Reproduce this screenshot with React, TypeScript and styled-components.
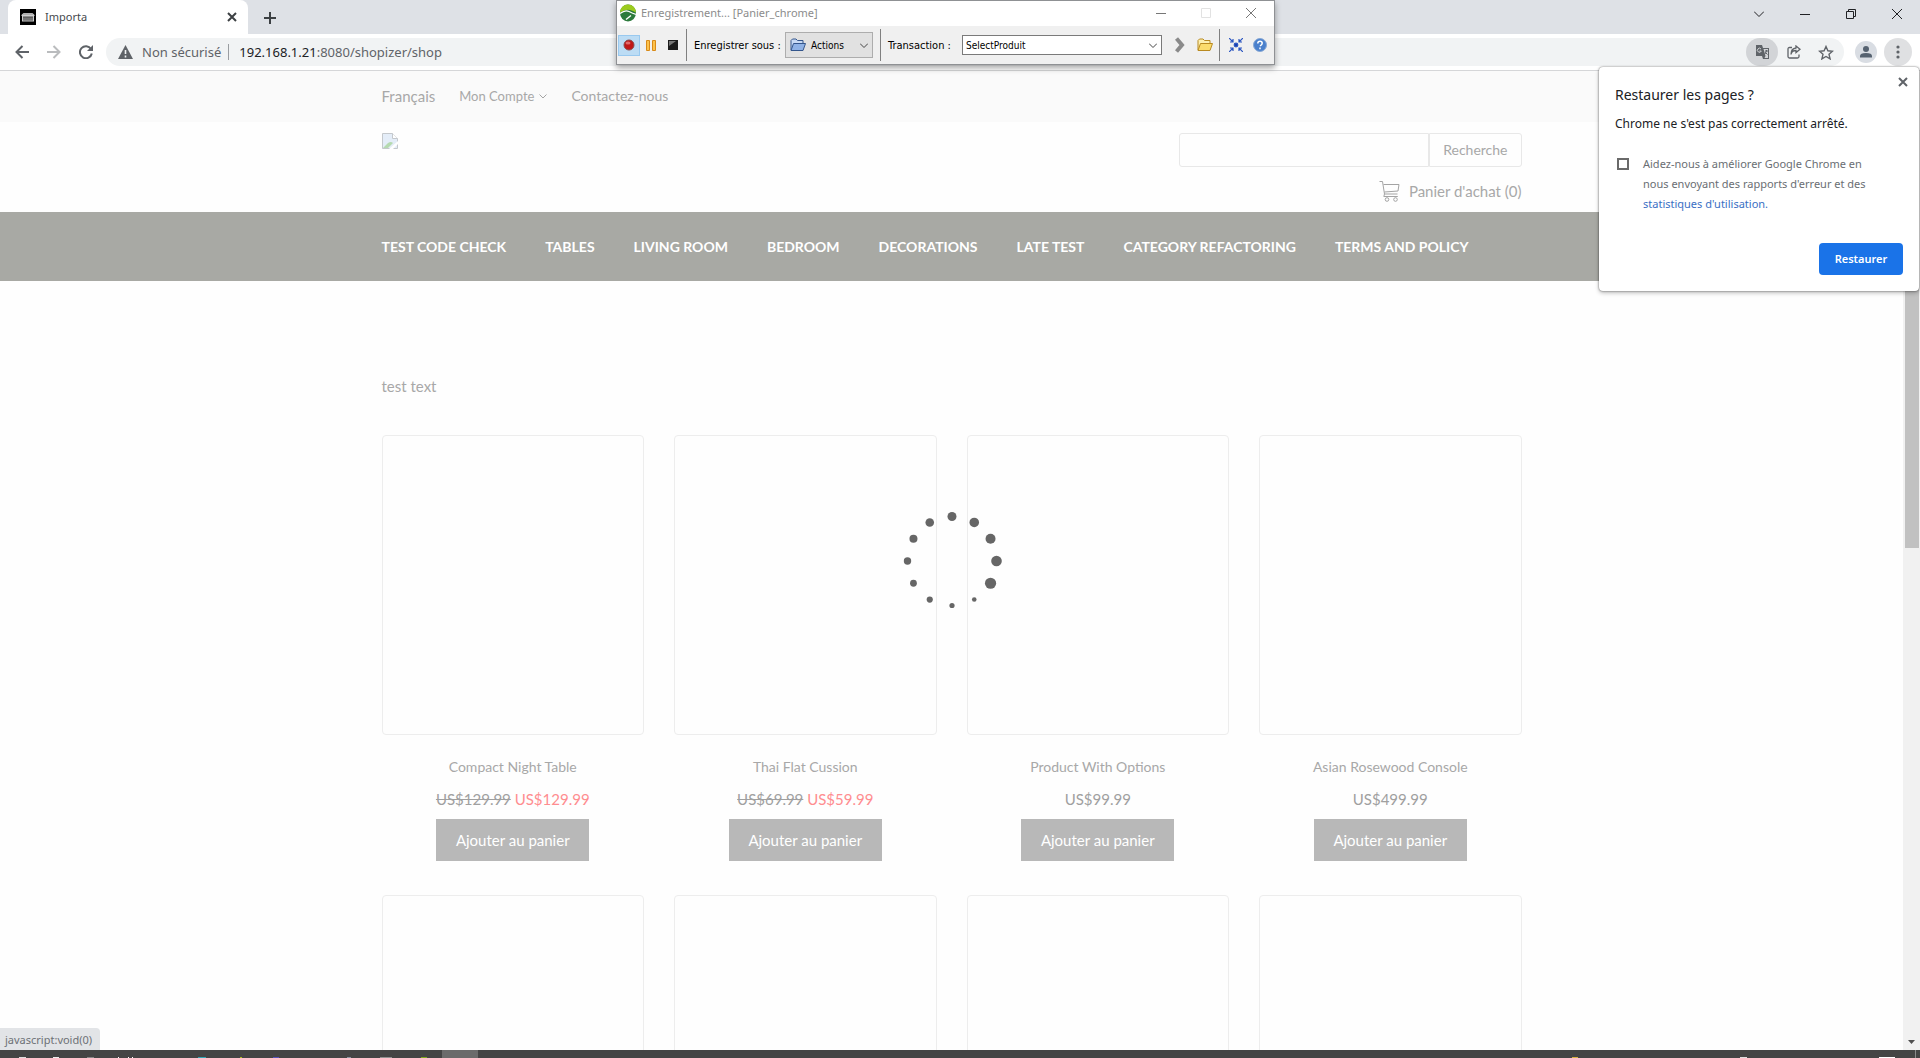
import React from "react";
import styled, { createGlobalStyle } from "styled-components";

const ui = `"Noto Sans", "Open Sans", sans-serif`;
const lato = `Lato, "Open Sans", sans-serif`;

const GlobalStyle = createGlobalStyle`
  * { box-sizing: border-box; }
  body { margin: 0; background: #fff; overflow: hidden; }
  button, input, select { font-family: inherit; margin: 0; padding: 0; }
  button { background: none; border: 0; color: inherit; }
  a { color: inherit; text-decoration: none; }
  svg { display: block; flex: none; }
`;

const Screen = styled.div`
  position: relative;
  display: flex;
  flex-direction: column;
  height: 100vh;
  overflow: hidden;
  font-family: ${ui};
`;

/* ---------- browser frame ---------- */
const TabStrip = styled.div`
  display: flex;
  flex: none;
  height: 34px;
  padding-left: 8px;
  background: #dee1e6;
`;

const Tab = styled.div`
  display: flex;
  align-items: center;
  width: 240px;
  padding: 0 11px 0 12px;
  border-radius: 8px 8px 0 0;
  background: #fff;
  color: #45494d;
  font-size: 11px;
  line-height: 16px;
`;

const TabTitle = styled.span`
  flex: 1;
  margin-left: 9px;
`;

const IconButton = styled.button<{ $w: number; $bg?: string; $round?: boolean }>`
  display: flex;
  align-items: center;
  justify-content: center;
  flex: none;
  width: ${(p) => p.$w}px;
  height: 28px;
  background: ${(p) => p.$bg || "transparent"};
  border-radius: ${(p) => (p.$round ? "14px" : "0")};
`;

const WindowControls = styled.div`
  display: flex;
  margin-left: auto;
`;

const Toolbar = styled.div`
  display: flex;
  align-items: center;
  flex: none;
  height: 37px;
  padding: 0 8px 0 5px;
  border-bottom: 1px solid #d5d6d8;
  background: #fff;
`;

const AddressBar = styled.div`
  display: flex;
  align-items: center;
  flex: 1;
  height: 28px;
  margin: 0 11px 0 4px;
  padding: 0 2px 0 12px;
  border-radius: 14px;
  background: #f1f3f4;
  color: #5f6368;
  font-size: 13px;
  line-height: 20px;
`;

const Security = styled.span`
  margin-left: 9px;
  padding-right: 7px;
  border-right: 1px solid #9a9da1;
  line-height: 16px;
`;

const Address = styled.span`
  flex: 1;
  margin-left: 10px;
  b { font-weight: 400; color: #202124; }
`;

const Actions = styled.div`
  display: flex;
  align-items: center;
`;

/* ---------- web page ---------- */
const Viewport = styled.div`
  display: flex;
  flex: 1;
  min-height: 0;
`;

const Page = styled.main`
  position: relative;
  flex: 1;
  overflow: hidden;
  background: #fefefe;
  color: #a8a8a8;
  font-family: ${lato};
`;

const Container = styled.div`
  width: 1140px;
  max-width: 100%;
  margin: 0 auto;
`;

const TopBar = styled.div`
  background: #fafafa;
`;

const TopLinks = styled(Container)`
  display: flex;
  align-items: center;
  gap: 24px;
  height: 51px;
  padding-bottom: 1px;
`;

const TopLink = styled.a<{ $size: number }>`
  display: flex;
  align-items: center;
  gap: 5px;
  font-size: ${(p) => p.$size}px;
  line-height: 20px;
`;

const Header = styled(Container)`
  display: flex;
  justify-content: space-between;
  height: 90px;
  padding-top: 11px;
`;

const HeaderSide = styled.div`
  display: flex;
  flex-direction: column;
  align-items: flex-end;
`;

const Search = styled.form`
  display: flex;
  height: 34px;
`;

const SearchInput = styled.input`
  width: 250px;
  border: 1px solid #e8e8e8;
  border-radius: 3px 0 0 3px;
  background: #fefefe;
`;

const SearchButton = styled.button`
  padding: 0 13px 2px;
  border: 1px solid #e8e8e8;
  border-radius: 0 3px 3px 0;
  font-size: 14px;
`;

const Cart = styled.a`
  display: flex;
  align-items: center;
  gap: 9px;
  margin-top: 13px;
  font-size: 15px;
  line-height: 22px;
`;

const Nav = styled.nav`
  background: #a8a9a4;
`;

const NavList = styled(Container)`
  display: flex;
  align-items: center;
  gap: 39px;
  height: 69px;
  color: #fff;
  font-size: 14px;
  font-weight: 700;
  white-space: nowrap;
`;

const Intro = styled.p`
  margin: 94px 0 38px;
  font-size: 15px;
  line-height: 22px;
`;

const Grid = styled.div`
  display: grid;
  grid-template-columns: repeat(4, 1fr);
  gap: 34px 30px;
`;

const Product = styled.article`
  display: flex;
  flex-direction: column;
  align-items: center;
`;

const Picture = styled.div`
  width: 100%;
  height: 300px;
  border: 1px solid #ededed;
  border-radius: 4px;
`;

const Name = styled.h3`
  margin: 21px 0 10px;
  font-size: 14px;
  font-weight: 400;
  line-height: 22px;
`;

const Price = styled.p`
  margin: 0;
  color: #a0a0a0;
  font-size: 15px;
  line-height: 22px;
`;

const Sale = styled.span`
  color: #ff8d90;
`;

const AddButton = styled.button`
  height: 42px;
  width: 153px;
  margin-top: 9px;
  background: #b8b8b8;
  color: #fff;
  font-size: 15px;
`;

const Loader = styled.div`
  position: absolute;
  left: 50%;
  top: 490px;
  transform: translate(-50%, -50%);
`;

const ScrollTrack = styled.div`
  display: flex;
  flex-direction: column;
  flex: none;
  width: 17px;
  padding-top: 17px;
  background: #f1f1f1;
`;

const ScrollThumb = styled.div`
  height: 460px;
  margin: 0 1px 0 2px;
  background: #c1c1c1;
`;

const ScrollDown = styled.button`
  display: flex;
  align-items: center;
  justify-content: center;
  height: 17px;
  margin-top: auto;
`;

/* ---------- restore bubble ---------- */
const Bubble = styled.aside`
  position: absolute;
  top: 67px;
  right: 1px;
  width: 320px;
  height: 224px;
  padding: 18px 16px 16px;
  border-radius: 4px;
  background: #fff;
  box-shadow: 0 0 2px rgba(0, 0, 0, 0.6), 0 2px 4px rgba(0, 0, 0, 0.25);
  display: flex;
  flex-direction: column;
  color: #202124;
`;

const BubbleClose = styled.button`
  position: absolute;
  top: 10px;
  right: 11px;
`;

const BubbleTitle = styled.h2`
  margin: 0;
  font-size: 14px;
  font-weight: 400;
  line-height: 20px;
`;

const BubbleText = styled.p`
  margin: 10px 0 21px;
  font-size: 12px;
  line-height: 18px;
`;

const CheckRow = styled.div`
  display: flex;
  align-items: flex-start;
  gap: 14px;
  padding-left: 2px;
  color: #6a6e73;
  font-size: 11px;
  line-height: 20px;
  a { color: #3a6fc4; }
`;

const Check = styled.input`
  appearance: none;
  flex: none;
  width: 12px;
  height: 12px;
  margin-top: 4px;
  border: 2px solid #6a6a6a;
`;

const Restore = styled.button`
  align-self: flex-end;
  width: 84px;
  height: 32px;
  margin-top: auto;
  padding-bottom: 1px;
  border-radius: 4px;
  background: #1a73e8;
  color: #fff;
  font-size: 11px;
  font-weight: 600;
`;

/* ---------- recorder window ---------- */
const Recorder = styled.section`
  position: absolute;
  top: 0;
  left: 616px;
  width: 659px;
  border: 1px solid #8f9194;
  background: #f0f0f0;
  box-shadow: 0 3px 6px rgba(0, 0, 0, 0.35);
  color: #000;
  font-family: "DejaVu Sans Condensed", "Open Sans", sans-serif;
`;

const RecorderTitle = styled.header`
  display: flex;
  align-items: center;
  height: 25px;
  padding: 0 1px 2px 3px;
  background: #fff;
  color: #8c8c8c;
  font-family: ${ui};
  font-size: 11px;
`;

const RecorderName = styled.span`
  flex: 1;
  margin-left: 5px;
`;

const RecorderBar = styled.div`
  display: flex;
  align-items: center;
  height: 38px;
  padding-left: 1px;
  font-size: 11px;
`;

const ToolButton = styled.button<{ $w: number; $on?: boolean }>`
  display: flex;
  align-items: center;
  justify-content: center;
  flex: none;
  width: ${(p) => p.$w}px;
  height: 21px;
  border: 1px solid ${(p) => (p.$on ? "#99c9ef" : "transparent")};
  background: ${(p) => (p.$on ? "#bcdcf4" : "transparent")};
`;

const Rule = styled.span`
  width: 1px;
  height: 32px;
  background: #808080;
`;

const BarLabel = styled.label<{ $w: number }>`
  width: ${(p) => p.$w}px;
  padding-left: 7px;
  white-space: nowrap;
`;

const ActionsButton = styled.button`
  display: flex;
  align-items: center;
  gap: 5px;
  width: 88px;
  height: 26px;
  margin-right: 7px;
  padding: 0 4px;
  border: 1px solid #adadad;
  background: #e1e1e1;
  font-size: 10px;
  span { flex: 1; text-align: left; }
`;

const SelectWrap = styled.div`
  display: flex;
  align-items: center;
  width: 200px;
  height: 20px;
  padding-right: 4px;
  border: 1px solid #7a7a7a;
  background: #fff;
`;

const Select = styled.select`
  appearance: none;
  flex: 1;
  height: 18px;
  padding-left: 3px;
  border: 0;
  background: #fff;
  color: #000;
  font-size: 10px;
`;

/* ---------- bottom ---------- */
const Status = styled.div`
  position: absolute;
  left: 0;
  bottom: 8px;
  height: 22px;
  padding: 1px 8px 0 5px;
  border-radius: 0 4px 0 0;
  background: #e2e4e7;
  color: #6d7176;
  font-size: 11px;
  line-height: 22px;
`;

const Taskbar = styled.footer`
  display: flex;
  align-items: flex-end;
  flex: none;
  height: 8px;
  background: #444;
`;

const Sliver = styled.span<{ $gap: number; $w: number; $c: string; $h?: number }>`
  width: ${(p) => p.$w}px;
  height: ${(p) => p.$h || 1}px;
  margin-left: ${(p) => p.$gap}px;
  background: ${(p) => p.$c};
`;

const Spread = styled.span`
  flex: 1;
`;

type StrokeProps = { d: string; w: number; h: number; c?: string; s?: number };
const Line = ({ d, w, h, c = "#202124", s = 1 }: StrokeProps) => (
  <svg width={w} height={h} viewBox={`0 0 ${w} ${h}`} fill="none" stroke={c} strokeWidth={s}>
    <path d={d} />
  </svg>
);

const Favicon = () => (
  <svg width="16" height="16" viewBox="0 0 16 16">
    <rect width="16" height="16" fill="#000" />
    <path d="M1.500 6l2-2h9l2 2v1h-13z" fill="#d0d0d0" />
    <path d="M3 5h10" stroke="#666" strokeWidth=".6" />
    <path d="M3 7h10v4.500H3z" fill="#8c8c8c" />
    <path d="M3 8.500h10M3 10h10" stroke="#333" strokeWidth=".5" />
    <path d="M2.500 7v5M13.500 7v5M2 12h12" stroke="#ccc" />
  </svg>
);

const Folder = ({ fill, edge, light }: { fill: string; edge: string; light: string }) => (
  <svg width="16" height="14" viewBox="0 0 16 14" stroke={edge} strokeLinejoin="round">
    <path d="M1 12V2.500L2.500 1h3.500l1.500 1.500H13V5" fill={light} />
    <path d="M1 12.500L3.500 5.500h12L13 12.500z" fill={fill} />
  </svg>
);

const CartIcon = () => (
  <svg width="21" height="22" viewBox="0 0 21 22" fill="none" stroke="#a4a4a4">
    <path d="M.5 1.500h3l2 12.500h13M4.500 4.500h15.500l-1 6.500-13.500 1M5.500 14l-.7 2.500h14" />
    <circle cx="8" cy="19.500" r="1.800" />
    <circle cx="16.500" cy="19.500" r="1.800" />
  </svg>
);

const dotSizes = [4.5, 4.8, 5, 5.3, 5.6, 2.3, 2.6, 3.1, 3.4, 3.7, 4, 4.3];

const Spinner = () => (
  <svg width="104" height="104" viewBox="-52 -52 104 104" fill="#666">
    {dotSizes.map((r, i) => {
      const a = (i * Math.PI) / 6;
      return <circle key={i} cx={44.5 * Math.sin(a)} cy={-44.5 * Math.cos(a)} r={r} />;
    })}
  </svg>
);

const categories = [
  "TEST CODE CHECK", "TABLES", "LIVING ROOM", "BEDROOM",
  "DECORATIONS", "LATE TEST", "CATEGORY REFACTORING", "TERMS AND POLICY",
];

const products = [
  { name: "Compact Night Table", price: "US$129.99", sale: "US$129.99" },
  { name: "Thai Flat Cussion", price: "US$69.99", sale: "US$59.99" },
  { name: "Product With Options", price: "US$99.99" },
  { name: "Asian Rosewood Console", price: "US$499.99" },
];

const leftIcons = [
  { gap: 19, w: 7, c: "#ddd" }, { gap: 27, w: 6, c: "#eee" }, { gap: 28, w: 7, c: "#888" },
  { gap: 24, w: 1, c: "#fff" }, { gap: 9, w: 1, c: "#fff" }, { gap: 3, w: 1, c: "#fff" },
  { gap: 65, w: 8, c: "#2fa5b5" }, { gap: 34, w: 2, c: "#a8b820" }, { gap: 31, w: 6, c: "#5550b8" },
  { gap: 68, w: 4, c: "#8a93a0" }, { gap: 29, w: 12, c: "#909090" }, { gap: 29, w: 6, c: "#7da61c" },
];

const App = () => (
  <Screen>
    <GlobalStyle />
    <TabStrip>
      <Tab>
        <Favicon />
        <TabTitle>Importa</TabTitle>
        <button aria-label="Fermer l'onglet"><Line w={10} h={10} d="M1 1l8 8M9 1l-8 8" s={2} c="#3c4043" /></button>
      </Tab>
      <IconButton $w={44} aria-label="Nouvel onglet">
        <Line w={12} h={22} d="M6 9v12M0 15h12" s={2} c="#3c4043" />
      </IconButton>
      <WindowControls>
        <IconButton $w={46} aria-label="Rechercher"><Line w={10} h={6} d="M0 .5l5 5 5-5" /></IconButton>
        <IconButton $w={46} aria-label="Réduire"><Line w={10} h={2} d="M0 1.500h10" /></IconButton>
        <IconButton $w={46} aria-label="Restaurer la fenêtre"><Line w={10} h={10} d="M.5 2.500h7v7h-7zM2.500 2.500v-2h7v7h-2" /></IconButton>
        <IconButton $w={46} aria-label="Fermer"><Line w={10} h={10} d="M0 0l10 10M10 0L0 10" /></IconButton>
      </WindowControls>
    </TabStrip>
    <Toolbar>
      <IconButton $w={33} aria-label="Précédent"><Line w={14} h={14} d="M14 7H2M7.500 1L1.500 7l6 6" s={2} c="#5f6368" /></IconButton>
      <IconButton $w={32} aria-label="Suivant"><Line w={14} h={14} d="M0 7h12M6.500 1l6 6-6 6" s={2} c="#babcbe" /></IconButton>
      <IconButton $w={32} aria-label="Actualiser">
        <svg width="14" height="14" viewBox="0 0 14 14"><path d="M12 4a6 6 0 1 0 .8 4.500" fill="none" stroke="#5f6368" strokeWidth="2" /><path d="M14 0v6H8z" fill="#5f6368" /></svg>
      </IconButton>
      <AddressBar>
        <svg width="15" height="14" viewBox="0 0 15 14"><path d="M7.500 0L15 14H0z" fill="#5f6368" /><path d="M7.500 5v4M7.500 10.500v2" stroke="#f1f3f4" strokeWidth="1.600" /></svg>
        <Security>Non sécurisé</Security>
        <Address><b>192.168.1.21</b>:8080/shopizer/shop</Address>
        <Actions>
          <IconButton $w={32} $bg="#d2d4d7" $round aria-label="Traduire">
            <svg width="15" height="15" viewBox="0 0 15 15"><path d="M1 0h6l1 3h6v11H8l-1-3H1z" fill="#5f6368" /><path d="M8.500 4H13v9H9.500l1-2z" fill="#d2d4d7" /><path d="M6 4a2 2 0 1 0 .3 2H4.500" stroke="#d2d4d7" fill="none" /><path d="M10 6h3M11.500 5v1l-1.500 3M10.500 7.500l2 2" stroke="#5f6368" fill="none" /></svg>
          </IconButton>
          <IconButton $w={32} aria-label="Partager">
            <svg width="14" height="14" viewBox="0 0 14 14" fill="none" stroke="#5f6368" strokeWidth="1.300"><path d="M5 2.500H2.500Q1 2.500 1 4v7.500Q1 13 2.500 13h8Q12 13 12 11.500V9.500" /><path d="M4 9.500Q4.500 5.500 9 5.500V7.500L13 4.200 9 1v2Q4 3.500 4 9.500z" /></svg>
          </IconButton>
          <IconButton $w={32} aria-label="Favoris">
            <svg width="16" height="15" viewBox="0 0 16 15" fill="none" stroke="#5f6368" strokeWidth="1.400"><path d="M8 1.500l1.900 4.300 4.600.4-3.500 3.100 1.100 4.600L8 11.500l-4.100 2.400L5 9.300 1.500 6.200l4.600-.4z" /></svg>
          </IconButton>
        </Actions>
      </AddressBar>
      <IconButton $w={22} aria-label="Profil">
        <svg width="22" height="22" viewBox="0 0 22 22"><circle cx="11" cy="11" r="11" fill="#d9dde3" /><circle cx="11" cy="8" r="3" fill="#566270" /><path d="M5 16.500v-1.500q0-3 6-3t6 3v1.500z" fill="#566270" /></svg>
      </IconButton>
      <Actions>
        <svg width="7" height="1" />
        <IconButton $w={28} $bg="#dfe0e2" $round aria-label="Menu">
          <svg width="4" height="14" fill="#5f6368"><circle cx="2" cy="2" r="1.600" /><circle cx="2" cy="7" r="1.600" /><circle cx="2" cy="12" r="1.600" /></svg>
        </IconButton>
      </Actions>
    </Toolbar>

    <Viewport>
      <Page>
        <TopBar>
          <TopLinks>
            <TopLink href="#" $size={15}>Français</TopLink>
            <TopLink href="#" $size={13}>Mon Compte <Line w={8} h={5} d="M.5 .5l3.500 3.500L7.500 .5" c="#a4a4a4" /></TopLink>
            <TopLink href="#" $size={14}>Contactez-nous</TopLink>
          </TopLinks>
        </TopBar>
        <Header>
          <svg width="16" height="16" viewBox="0 0 16 16" role="img" aria-label="Logo">
            <path d="M.5 .5h10l5 5v10H.5z" fill="#e4edf8" stroke="#c4c8cc" />
            <path d="M10.500 .5v5h5" fill="#fff" stroke="#c4c8cc" />
            <path d="M1 15l5-5q3-2 5 0l-5 5z" fill="#b5dab0" />
            <path d="M7 16l9-8v3l-5 5z" fill="#fff" />
          </svg>
          <HeaderSide>
            <Search onSubmit={(e) => e.preventDefault()}>
              <SearchInput aria-label="Recherche" />
              <SearchButton>Recherche</SearchButton>
            </Search>
            <Cart href="#"><CartIcon />Panier d'achat (0)</Cart>
          </HeaderSide>
        </Header>
        <Nav>
          <NavList>{categories.map((c) => <a href="#" key={c}>{c}</a>)}</NavList>
        </Nav>
        <Container>
          <Intro>test text</Intro>
          <Grid>
            {products.map((p) => (
              <Product key={p.name}>
                <Picture />
                <Name>{p.name}</Name>
                <Price>{p.sale ? <><del>{p.price}</del> <Sale>{p.sale}</Sale></> : p.price}</Price>
                <AddButton>Ajouter au panier</AddButton>
              </Product>
            ))}
            {products.map((p) => <Product key={p.name + "-next"}><Picture /></Product>)}
          </Grid>
        </Container>
        <Loader><Spinner /></Loader>
      </Page>
      <ScrollTrack>
        <ScrollThumb />
        <ScrollDown aria-label="Défiler"><svg width="7" height="4"><path d="M0 0h7L3.500 4z" fill="#505050" /></svg></ScrollDown>
      </ScrollTrack>
    </Viewport>

    <Taskbar>
      {leftIcons.map((s, i) => <Sliver key={i} $gap={s.gap} $w={s.w} $c={s.c} />)}
      <Sliver $gap={15} $w={36} $h={8} $c="#6b6b6b" />
      <Spread />
      <Sliver $gap={0} $w={6} $c="#d8b040" />
      <Sliver $gap={162} $w={7} $c="#ddd" />
      <Sliver $gap={132} $w={16} $c="#fff" />
      <Sliver $gap={20} $w={1} $h={8} $c="#8a8a8a" />
      <Sliver $gap={0} $w={4} $h={8} $c="#444" />
    </Taskbar>
    <Status>javascript:void(0)</Status>

    <Bubble>
      <BubbleClose aria-label="Fermer"><Line w={10} h={10} d="M1 1l8 8M9 1l-8 8" s={2} c="#5f6368" /></BubbleClose>
      <BubbleTitle>Restaurer les pages ?</BubbleTitle>
      <BubbleText>Chrome ne s'est pas correctement arrêté.</BubbleText>
      <CheckRow>
        <Check type="checkbox" id="stats" />
        <label htmlFor="stats">
          Aidez-nous à améliorer Google Chrome en<br />nous envoyant des rapports d'erreur et des<br />
          <a href="#">statistiques d'utilisation.</a>
        </label>
      </CheckRow>
      <Restore>Restaurer</Restore>
    </Bubble>

    <Recorder>
      <RecorderTitle>
        <svg width="16" height="18" viewBox="0 0 16 18"><ellipse cx="8" cy="9" rx="8" ry="8.500" fill="#2c7a3c" /><path d="M0 8.500a8 8 0 0 1 16 0q-3-2-6-2.500-5-1-10 2.500z" fill="#9ccb1e" /><path d="M0 9.500q5-4 9-2t7 3" stroke="#fff" strokeWidth="1.300" fill="none" /><path d="M6 15.500l5-4" stroke="#fff" strokeWidth="1.500" /></svg>
        <RecorderName>Enregistrement... [Panier_chrome]</RecorderName>
        <IconButton $w={45} aria-label="Réduire"><Line w={10} h={2} d="M0 1.500h10" c="#777" /></IconButton>
        <IconButton $w={45} aria-label="Agrandir"><Line w={10} h={10} d="M.5 .5h9v9h-9z" c="#e2e2e2" /></IconButton>
        <IconButton $w={45} aria-label="Fermer"><Line w={10} h={10} d="M0 0l10 10M10 0L0 10" c="#777" /></IconButton>
      </RecorderTitle>
      <RecorderBar>
        <ToolButton $w={22} $on aria-label="Enregistrer"><svg width="12" height="12"><circle cx="6" cy="6" r="5" fill="#c01818" stroke="#8c4a4a" /><ellipse cx="5" cy="4" rx="2.500" ry="1.500" fill="#e06a6a" /></svg></ToolButton>
        <ToolButton $w={22} aria-label="Pause"><svg width="10" height="11" fill="#fcc24c" stroke="#d98a18"><path d="M.5 .5h3v10h-3zM6.500 .5h3v10h-3z" /></svg></ToolButton>
        <ToolButton $w={21} aria-label="Arrêter"><svg width="10" height="10"><path d="M0 0h10v10H0z" fill="#1c1c1c" /><path d="M1 1h7L1 6z" fill="#777" /></svg></ToolButton>
        <svg width="3" height="1" />
        <Rule />
        <BarLabel $w={98} htmlFor="target">Enregistrer sous :</BarLabel>
        <ActionsButton id="target"><Folder fill="#8fb2e6" edge="#34568c" light="#c8daf4" /><span>Actions</span><Line w={8} h={5} d="M0 .5l4 4 4-4" c="#444" /></ActionsButton>
        <Rule />
        <BarLabel $w={81} htmlFor="transaction">Transaction :</BarLabel>
        <SelectWrap>
          <Select id="transaction"><option>SelectProduit</option></Select>
          <Line w={8} h={5} d="M0 .5l4 4 4-4" c="#444" />
        </SelectWrap>
        <svg width="7" height="1" />
        <ToolButton $w={22} aria-label="Suivant"><Line w={10} h={16} d="M1.500 1.500L7 8l-5.500 6.500" s={4} c="#8a8a8a" /></ToolButton>
        <ToolButton $w={28} aria-label="Ouvrir"><Folder fill="#fbdc6c" edge="#b98a20" light="#fdf0b0" /></ToolButton>
        <Rule />
        <ToolButton $w={31} aria-label="Compacter">
          <svg width="14" height="14" viewBox="0 0 14 14" fill="none" stroke="#2a55c0" strokeWidth="1.200"><circle cx="7" cy="7" r="1.800" fill="#1b3fb0" /><path d="M0 0l4 4M4 1v3H1M14 0l-4 4M10 1v3h3M0 14l4-4M4 13v-3H1M14 14l-4-4M10 13v-3h3" /></svg>
        </ToolButton>
        <ToolButton $w={18} aria-label="Aide">
          <svg width="14" height="14" viewBox="0 0 14 14"><circle cx="7" cy="7" r="6.500" fill="#4a80cc" stroke="#88a8d4" /><path d="M4.800 5.500q0-2.200 2.200-2.200t2.200 2q0 1.200-2.200 2.700M7 9.500v1.700" fill="none" stroke="#fff" strokeWidth="1.500" /></svg>
        </ToolButton>
      </RecorderBar>
    </Recorder>
  </Screen>
);

export default App;
